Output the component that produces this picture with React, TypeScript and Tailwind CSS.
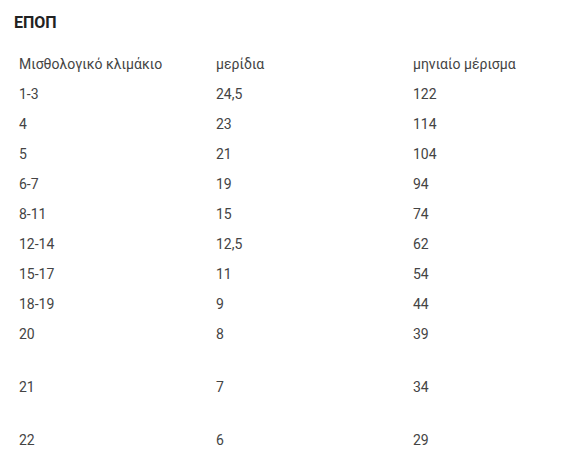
import React from "react";

const rows: [string, string, string, boolean?][] = [
  ["1-3", "24,5", "122"],
  ["4", "23", "114"],
  ["5", "21", "104"],
  ["6-7", "19", "94"],
  ["8-11", "15", "74"],
  ["12-14", "12,5", "62"],
  ["15-17", "11", "54"],
  ["18-19", "9", "44"],
  ["20", "8", "39", true],
  ["21", "7", "34", true],
  ["22", "6", "29"],
];

export default function App() {
  return (
    <div className="bg-white w-[565px] h-[471px] px-[14px] pt-[13px] text-[#444]" style={{ fontFamily: "Roboto, sans-serif" }}>
      <h2 className="text-[16px] font-bold leading-[20px] text-[#222]">ΕΠΟΠ</h2>
      <table className="mt-[16px] text-[14px] leading-[20px] border-collapse">
        <tbody>
          <tr>
            <td className="w-[197px] px-[5px] py-[5px] align-top">Μισθολογικό κλιμάκιο</td>
            <td className="w-[197px] px-[5px] py-[5px] align-top">μερίδια</td>
            <td className="w-[140px] px-[5px] py-[5px] align-top">μηνιαίο μέρισμα</td>
          </tr>
          {rows.map(([a, b, c, tall]) => (
            <tr key={a}>
              <td className={tall ? "px-[5px] pt-[5px] pb-[28px] align-top" : "px-[5px] py-[5px] align-top"}>{a}</td>
              <td className={tall ? "px-[5px] pt-[5px] pb-[28px] align-top" : "px-[5px] py-[5px] align-top"}>{b}</td>
              <td className={tall ? "px-[5px] pt-[5px] pb-[28px] align-top" : "px-[5px] py-[5px] align-top"}>{c}</td>
            </tr>
          ))}
        </tbody>
      </table>
    </div>
  );
}
